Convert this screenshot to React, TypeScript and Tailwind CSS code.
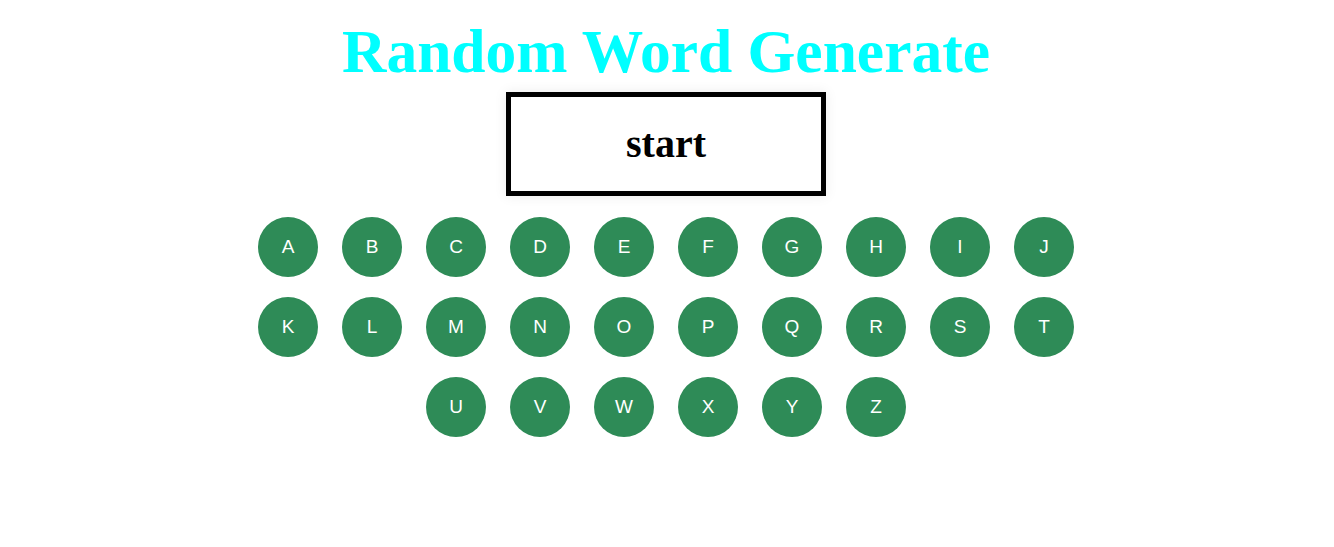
import React from "react";

const letters = "ABCDEFGHIJKLMNOPQRSTUVWXYZ".split("");

export default function App() {
  return (
    <div className="min-h-[547px] w-full bg-white flex flex-col items-center pr-[2px]">
      <h1 className="pt-[16px] text-[61.5px] leading-[70px] font-bold text-[#00ffff] font-['Liberation_Serif','Times_New_Roman',serif]">
        Random Word Generate
      </h1>
      <button className="mt-[6px] w-[320px] h-[104px] border-[5px] border-black flex items-center justify-center bg-white shadow-[0_0_12px_rgba(0,0,0,0.08)] text-[40px] font-bold text-black font-['Liberation_Serif','Times_New_Roman',serif]">
        start
      </button>
      <div className="mt-[21px] w-[840px] flex flex-wrap justify-center gap-x-6 gap-y-5">
        {letters.map((l) => (
          <div
            key={l}
            className="w-[60px] h-[60px] rounded-full bg-[#2e8b57] text-white flex items-center justify-center text-[19px] font-['Liberation_Sans',Arial,sans-serif]"
          >
            {l}
          </div>
        ))}
      </div>
    </div>
  );
}
